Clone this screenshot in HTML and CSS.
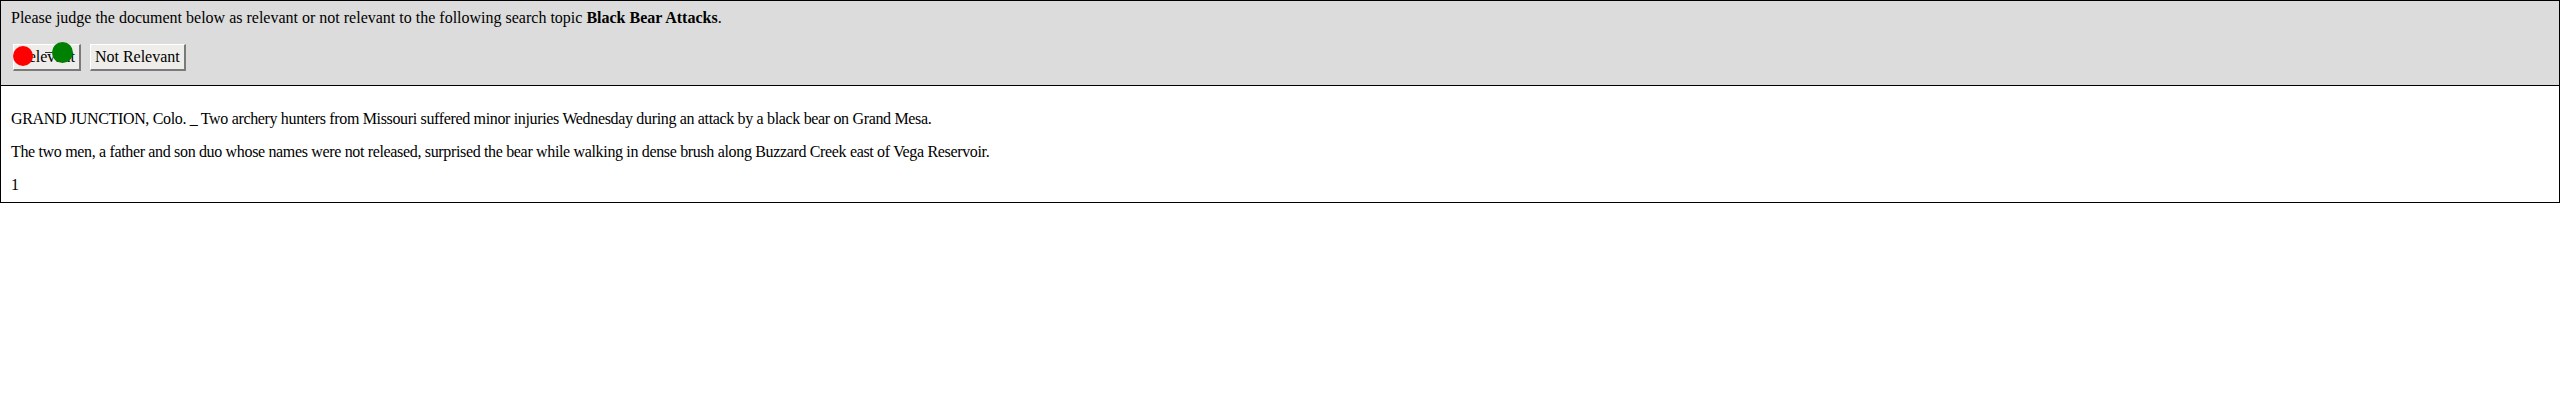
FILE: index.html
```html
<!DOCTYPE html>
<html>
<head>
<meta charset="utf-8">
<link rel="stylesheet" href="styles.css">
</head>
<body>
<div class="judge">
  <div class="prompt">Please judge the document below as relevant or not relevant to the following search topic <b>Black Bear Attacks</b>.</div>
  <div class="actions">
    <span class="btn-wrap">
      <button class="btn">Relevant</button>
      <span class="dot dot-red"></span>
      <span class="link-line"></span>
      <span class="dot dot-green"></span>
    </span>
    <button class="btn">Not Relevant</button>
  </div>
</div>
<div class="doc">
  <p class="para">GRAND JUNCTION, Colo. _ Two archery hunters from Missouri suffered minor injuries Wednesday during an attack by a black bear on Grand Mesa.</p>
  <p class="para">The two men, a father and son duo whose names were not released, surprised the bear while walking in dense brush along Buzzard Creek east of Vega Reservoir.</p>
  <div class="pagenum">1</div>
</div>
</body>
</html>
```
FILE: styles.css
```css
html, body {
  margin: 0;
  padding: 0;
  background: #ffffff;
}
body {
  font-family: "Liberation Serif", "Times New Roman", serif;
  font-size: 16px;
  color: #000;
}
.judge {
  background: #dcdcdc;
  border: 1px solid #000;
  padding: 8px 10px 14px 10px;
}
.prompt {
  line-height: 18px;
}
.actions {
  display: flex;
  gap: 9px;
  margin-top: 17px;
  padding-left: 2px;
}
.btn-wrap {
  position: relative;
  display: inline-flex;
}
.btn {
  font-family: "Liberation Serif", "Times New Roman", serif;
  font-size: 16px;
  line-height: 18px;
  color: #000;
  background: #efede9;
  border-style: solid;
  border-width: 1px 2px 2px 1px;
  border-color: #ffffff #7a7a7a #7a7a7a #ffffff;
  padding: 3px 4px 3px 4px;
  margin: 0;
  border-radius: 0;
}
.dot {
  position: absolute;
  border-radius: 50%;
}
.dot-red {
  background: #ff0000;
  width: 20px;
  height: 20px;
  left: 0px;
  top: 2px;
}
.dot-green {
  background: #008000;
  width: 21px;
  height: 21px;
  left: 39px;
  top: -2px;
}
.link-line {
  position: absolute;
  left: 32px;
  top: 8px;
  width: 18px;
  height: 1px;
  background: #333;
}
.doc {
  border: 1px solid #000;
  border-top: none;
  padding: 8px 10px 9px 10px;
  letter-spacing: -0.34px;
}
.para {
  margin: 16px 0;
  line-height: 17px;
}
.pagenum {
  line-height: 17px;
}
```
